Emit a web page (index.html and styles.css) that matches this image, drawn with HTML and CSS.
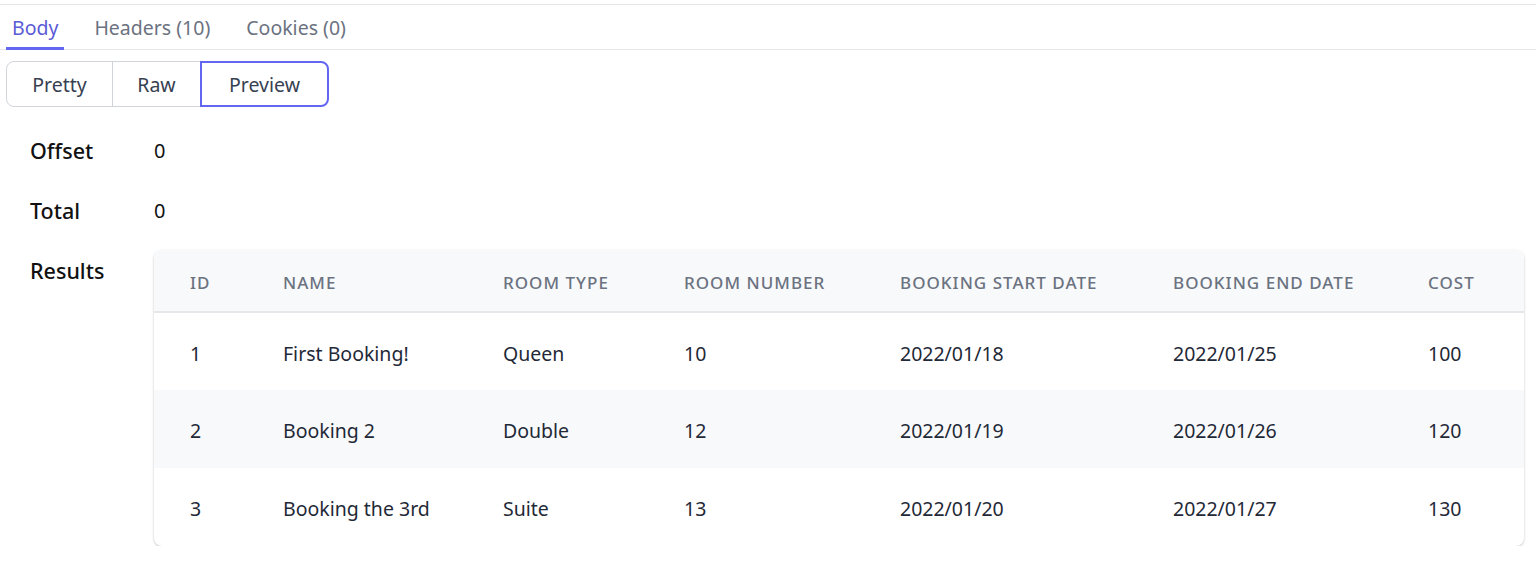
FILE: index.html
```html
<!DOCTYPE html>
<html>
<head>
<meta charset="utf-8">
<link rel="stylesheet" href="styles.css">
</head>
<body>
<div class="page">
  <div class="tabs">
    <div class="tab active">Body</div>
    <div class="tab">Headers (10)</div>
    <div class="tab">Cookies (0)</div>
  </div>
  <div class="seg">
    <div class="seg-btn">Pretty</div>
    <div class="seg-btn">Raw</div>
    <div class="seg-btn selected">Preview</div>
  </div>
  <div class="props">
    <div class="prop">
      <div class="key">Offset</div>
      <div class="val">0</div>
    </div>
    <div class="prop">
      <div class="key">Total</div>
      <div class="val">0</div>
    </div>
    <div class="prop results">
      <div class="key">Results</div>
      <div class="card">
        <table class="tbl">
          <thead>
            <tr>
              <th class="c-id">ID</th>
              <th class="c-name">Name</th>
              <th class="c-type">Room Type</th>
              <th class="c-num">Room Number</th>
              <th class="c-start">Booking Start Date</th>
              <th class="c-end">Booking End Date</th>
              <th class="c-cost">Cost</th>
            </tr>
          </thead>
          <tbody>
            <tr>
              <td>1</td><td>First Booking!</td><td>Queen</td><td>10</td><td>2022/01/18</td><td>2022/01/25</td><td>100</td>
            </tr>
            <tr class="alt">
              <td>2</td><td>Booking 2</td><td>Double</td><td>12</td><td>2022/01/19</td><td>2022/01/26</td><td>120</td>
            </tr>
            <tr>
              <td>3</td><td>Booking the 3rd</td><td>Suite</td><td>13</td><td>2022/01/20</td><td>2022/01/27</td><td>130</td>
            </tr>
          </tbody>
        </table>
      </div>
    </div>
  </div>
</div>
</body>
</html>
```

FILE: styles.css
```css
* { box-sizing: border-box; }
html, body { margin: 0; padding: 0; background: #fff; }
body {
  font-family: "Noto Sans", "Open Sans", sans-serif;
  color: #1f2937;
}
.page {
  border-top: 1px solid #e5e7eb;
  margin-top: 4px;
}
.tabs {
  display: flex;
  gap: 24px;
  padding-left: 6px;
  border-bottom: 1px solid #e5e7eb;
  height: 45px;
}
.tab {
  font-size: 19.5px;
  color: #6b7280;
  padding: 1px 6px 0;
  height: 45px;
  line-height: 44px;
  margin-bottom: -1px;
  border-bottom: 3px solid transparent;
}
.tab.active {
  color: #5b5bd6;
  border-bottom-color: #6366f1;
}
.seg {
  display: inline-flex;
  margin: 11px 0 0 6px;
}
.seg-btn {
  font-size: 19.5px;
  color: #374151;
  height: 46px;
  line-height: 44px;
  padding-top: 1px;
  border: 1px solid #d1d5db;
  margin-left: -1px;
  text-align: center;
}
.seg-btn:first-child {
  margin-left: 0;
  border-radius: 8px 0 0 8px;
  width: 107px;
}
.seg-btn:nth-child(2) { width: 89px; }
.seg-btn.selected {
  border: 2px solid #6366f1;
  border-radius: 0 8px 8px 0;
  width: 129px;
  line-height: 41px;
}
.props {
  padding: 28px 0 0 30px;
}
.prop {
  display: flex;
  align-items: flex-start;
  height: 60px;
}
.key {
  width: 124px;
  font-size: 21.5px;
  font-weight: 500;
  color: #111;
  line-height: 32px;
}
.val {
  font-size: 20px;
  color: #111;
  line-height: 32px;
}
.prop.results { height: auto; }
.card {
  margin-top: -5px;
  width: 1370px;
  border-radius: 8px;
  box-shadow: 0 1px 3px rgba(0,0,0,0.16), 0 1px 2px rgba(0,0,0,0.08);
  overflow: hidden;
}
.tbl {
  width: 100%;
  border-collapse: collapse;
}
.tbl th {
  background: #f8f9fb;
  height: 62px;
  text-align: left;
  font-size: 17px;
  font-weight: 500;
  color: #6b7280;
  text-transform: uppercase;
  letter-spacing: 0.06em;
  border-bottom: 2px solid #e5e7eb;
  padding: 3px 0 0 36px;
  white-space: nowrap;
}
.tbl td {
  height: 78px;
  font-size: 19.5px;
  color: #1f2937;
  padding: 3px 0 0 36px;
  white-space: nowrap;
}
.tbl tr.alt td { background: #f8f9fb; }
.c-id { width: 93px; }
.c-name { width: 220px; }
.c-type { width: 181px; }
.c-num { width: 216px; }
.c-start { width: 273px; }
.c-end { width: 255px; }
```
